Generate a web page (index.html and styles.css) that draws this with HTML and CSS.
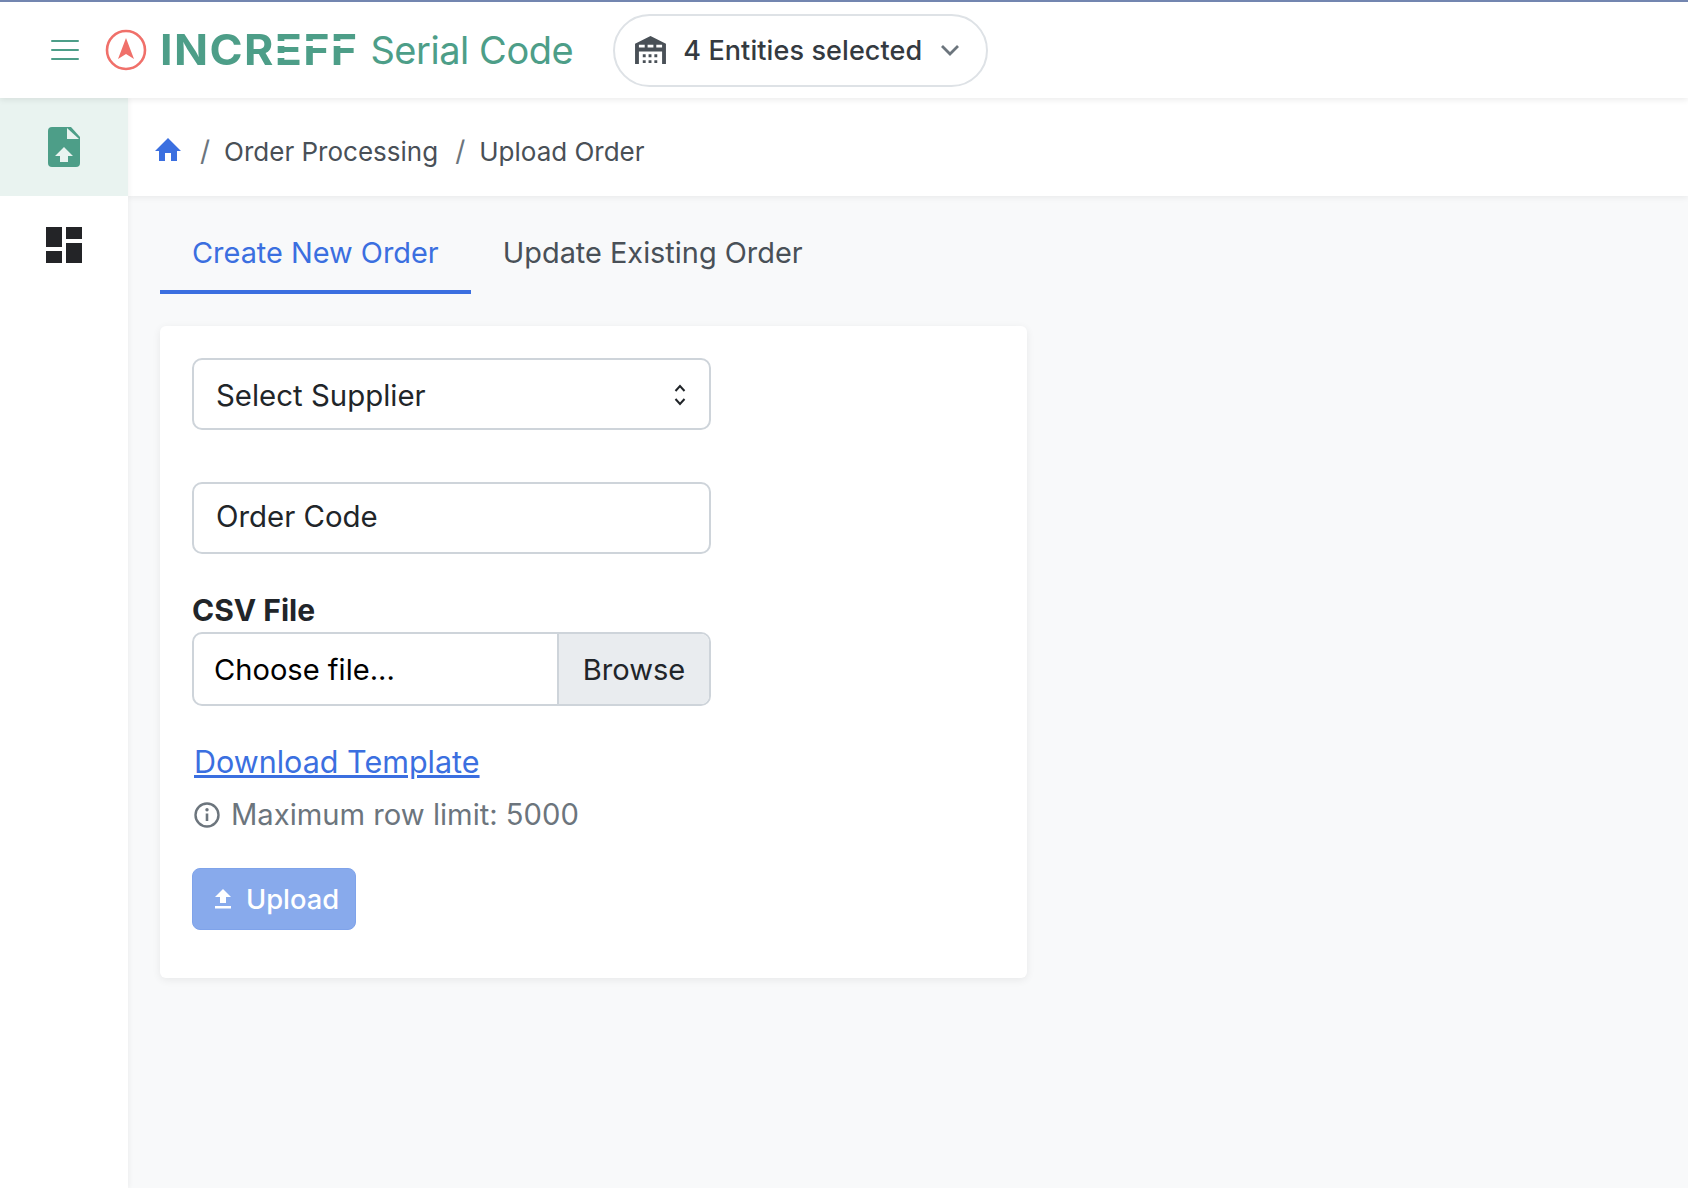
FILE: index.html
```html
<!DOCTYPE html>
<html lang="en">
<head>
<meta charset="utf-8">
<title>Upload Order</title>
<link rel="stylesheet" href="styles.css">
</head>
<body>
<header class="topbar">
  <svg class="burger" width="28" height="20" viewBox="0 0 28 20"><path d="M1 1h26M1 10h26M1 19h26" stroke="#4d9e88" stroke-width="2" stroke-linecap="round"/></svg>
  <svg class="logo-mark" width="42" height="42" viewBox="0 0 42 42"><circle cx="21" cy="21" r="19" fill="none" stroke="#f0706a" stroke-width="2.6"/><path d="M21 9l8 21-8-5-8 5z" fill="#f0706a"/></svg>
  <span class="brand">INCR<span class="brand-e">E</span><span class="brand-f">FF</span></span>
  <span class="product">Serial Code</span>
  <button class="entity" type="button">
    <svg width="31" height="28" viewBox="0 0 32 29"><path d="M0 8L16 0l16 8v21h-4V16H4v13H0z" fill="#495057"/><path d="M4 9h6v3H4zM13 9h6v3h-6zM22 9h6v3h-6z" fill="#fff"/><path d="M8 19h3v3H8zM14 19h3v3h-3zM20 19h3v3h-3zM8 25h3v3H8zM14 25h3v3h-3zM20 25h3v3h-3z" fill="#495057"/></svg>
    <span>4 Entities selected</span>
    <svg class="caret" width="20" height="12" viewBox="0 0 20 12"><path d="M2 2l8 8 8-8" fill="none" stroke="#6c757d" stroke-width="2.800"/></svg>
  </button>
</header>
<div class="shell">
  <nav class="sidebar">
    <a class="side-item active" href="#">
      <svg width="32" height="40" viewBox="0 0 32 40"><path d="M4 0h19l9 10v26a4 4 0 0 1-4 4H4a4 4 0 0 1-4-4V4a4 4 0 0 1 4-4z" fill="#4d9e88"/><path d="M19 1v11h12z" fill="#e9f3f0"/><path d="M16 20l9 9h-5v6h-8v-6H7z" fill="#e9f3f0"/></svg>
    </a>
    <a class="side-item" href="#">
      <svg width="36" height="36" viewBox="0 0 36 36"><path d="M0 0h16v20H0zM20 0h16v12H20zM0 24h16v12H0zM20 16h16v20H20z" fill="#232427"/></svg>
    </a>
  </nav>
  <main class="main">
    <div class="crumbs">
      <svg class="home" width="26" height="23" viewBox="0 0 26 23"><path d="M13 0l13 13h-4v10h-6v-8h-6v8H4V13H0z" fill="#3b6fe0"/></svg>
      <span class="sep">/</span>
      <a href="#">Order Processing</a>
      <span class="sep">/</span>
      <a href="#">Upload Order</a>
    </div>
    <div class="content">
      <div class="tabs">
        <a class="tab current" href="#">Create New Order</a>
        <a class="tab" href="#">Update Existing Order</a>
      </div>
      <section class="card">
        <div class="select-wrap">
          <select class="field supplier"><option>Select Supplier</option></select>
          <svg class="updown" width="12" height="22" viewBox="0 0 12 22"><path d="M1.500 7L6 2l4.500 5M1.500 15L6 20l4.500-5" fill="none" stroke="#212529" stroke-width="2"/></svg>
        </div>
        <input class="field order" type="text" placeholder="Order Code">
        <label class="label">CSV File</label>
        <div class="file">
          <span class="file-name">Choose file...</span>
          <span class="browse">Browse</span>
        </div>
        <a class="download" href="#">Download Template</a>
        <p class="hint">
          <svg width="26" height="26" viewBox="0 0 26 26"><circle cx="13" cy="13" r="11.500" fill="none" stroke="#6c757d" stroke-width="2.400"/><path d="M13 11.500v7.500" stroke="#6c757d" stroke-width="2.600"/><circle cx="13" cy="7.800" r="1.700" fill="#6c757d"/></svg>
          <span>Maximum row limit: 5000</span>
        </p>
        <button class="upload" type="button">
          <svg width="18" height="20" viewBox="0 0 18 20"><path d="M9 0l8 8h-5v6H6V8H1zM1 17h16v2.500H1z" fill="#fff"/></svg>
          <span>Upload</span>
        </button>
      </section>
    </div>
  </main>
</div>
</body>
</html>
```
FILE: styles.css
```css
* { box-sizing: border-box; }
html, body { height: 100%; }
body {
  margin: 0;
  font-family: Inter, "Liberation Sans", sans-serif;
  color: #212529;
  background: #fff;
  overflow: hidden;
}
a { text-decoration: none; color: inherit; }

.topbar {
  position: relative;
  z-index: 3;
  height: 98px;
  border-top: 2px solid #7386b0;
  background: #fff;
  box-shadow: 0 2px 6px rgba(0, 0, 0, .08);
  display: flex;
  align-items: center;
  padding-left: 51px;
}
.burger { margin-right: 26px; }
.logo-mark { margin-right: 13px; flex: none; }
.brand {
  display: inline-block;
  font-size: 42px;
  font-weight: 700;
  color: #4d9e88;
  letter-spacing: 1.300px;
  line-height: 1;
  margin-right: 24px;
  white-space: nowrap;
  transform: scaleX(1.065);
  transform-origin: left center;
}
.brand-e, .brand-f {
  display: inline-block;
  color: transparent;
  -webkit-background-clip: text;
  background-clip: text;
}
.brand-e {
  background-image: linear-gradient(#4d9e88 0 12px, transparent 12px 17.500px, #4d9e88 17.500px 24px, transparent 24px 29.500px, #4d9e88 29.500px);
}
.brand-f {
  background-image: linear-gradient(#4d9e88 0 12px, transparent 12px 17.500px, #4d9e88 17.500px);
}
.product {
  font-size: 38px;
  color: #4d9e88;
  margin-right: 40px;
  letter-spacing: -.45px;
  white-space: nowrap;
}
.entity {
  height: 73px;
  width: 375px;
  flex: none;
  border: 2px solid #dee2e6;
  border-radius: 37px;
  background: #fff;
  display: flex;
  align-items: center;
  padding: 0 0 0 20px;
  font: 500 27px Inter, "Liberation Sans", sans-serif;
  letter-spacing: .1px;
  color: #343a40;
}
.entity span { margin-left: 17px; }
.caret { margin-left: 18px; }

.shell { display: flex; height: 1090px; }
.sidebar {
  width: 128px;
  flex: none;
  background: #fff;
  box-shadow: 2px 0 4px rgba(0, 0, 0, .04);
  position: relative;
  z-index: 2;
}
.side-item {
  height: 98px;
  display: flex;
  align-items: center;
  justify-content: center;
}
.side-item.active { background: #e9f3f0; }

.main { flex: 1; background: #f8f9fa; min-width: 0; }
.crumbs {
  height: 98px;
  background: #fff;
  box-shadow: 0 2px 6px rgba(0, 0, 0, .06);
  display: flex;
  align-items: center;
  padding-left: 27px;
  font-size: 26px;
  color: #495057;
}
.home { margin-top: 4px; }
.crumbs a { padding-top: 8px; }
.sep { margin: 8px 14px 0 19px; color: #6c757d; font-size: 28px; }
.crumbs a + .sep { margin-left: 17px; }

.content { padding-left: 32px; }
.tabs { display: flex; height: 98px; align-items: stretch; }
.tab {
  padding: 39px 32px 0;
  font-size: 28.900px;
  color: #495057;
  border-bottom: 4px solid transparent;
}
.tab.current { color: #3b6fe0; border-bottom-color: #3b6fe0; }

.card {
  width: 867px;
  height: 652px;
  margin-top: 32px;
  padding: 32px;
  background: #fff;
  border-radius: 6px;
  box-shadow: 0 2px 8px rgba(0, 0, 0, .07);
  display: flex;
  flex-direction: column;
  align-items: flex-start;
}
.select-wrap { position: relative; }
.field {
  display: block;
  width: 519px;
  height: 72px;
  border: 2px solid #ced4da;
  border-radius: 10px;
  background: #fff;
  padding: 0 22px;
  font: 400 29.400px Inter, "Liberation Sans", sans-serif;
  color: #212529;
  appearance: none;
}
.field::placeholder { color: #212529; opacity: 1; }
.supplier { padding-top: 2px; }
.updown { position: absolute; right: 25px; top: 26px; }
.order { margin-top: 52px; padding-bottom: 4px; }
.label { font-size: 30px; font-weight: 700; margin-top: 38px; line-height: 36px; }
.file {
  width: 519px;
  height: 74px;
  margin-top: 4px;
  border: 2px solid #ced4da;
  border-radius: 10px;
  display: flex;
  overflow: hidden;
  font-size: 29.100px;
  align-items: stretch;
}
.file-name { flex: 1; padding-left: 20px; display: flex; align-items: center; color: #000; }
.browse {
  width: 152px;
  background: #e9ecef;
  border-left: 2px solid #ced4da;
  display: flex;
  align-items: center;
  justify-content: center;
}
.download {
  margin-top: 36px;
  margin-left: 2px;
  font-size: 30.500px;
  line-height: 39px;
  color: #3b6fe0;
  text-decoration: underline;
}
.hint {
  margin: 14px 0 0 2px;
  display: flex;
  align-items: center;
  gap: 11px;
  font-size: 29.200px;
  line-height: 40px;
  color: #6c757d;
}
.upload {
  margin-top: 33px;
  width: 164px;
  height: 62px;
  border: 1px solid #7fa3ea;
  border-radius: 8px;
  background: #88aaec;
  color: #fff;
  display: flex;
  align-items: center;
  justify-content: flex-start;
  padding: 0 0 0 21px;
  gap: 14px;
  font: 500 27.300px Inter, "Liberation Sans", sans-serif;
}
```
